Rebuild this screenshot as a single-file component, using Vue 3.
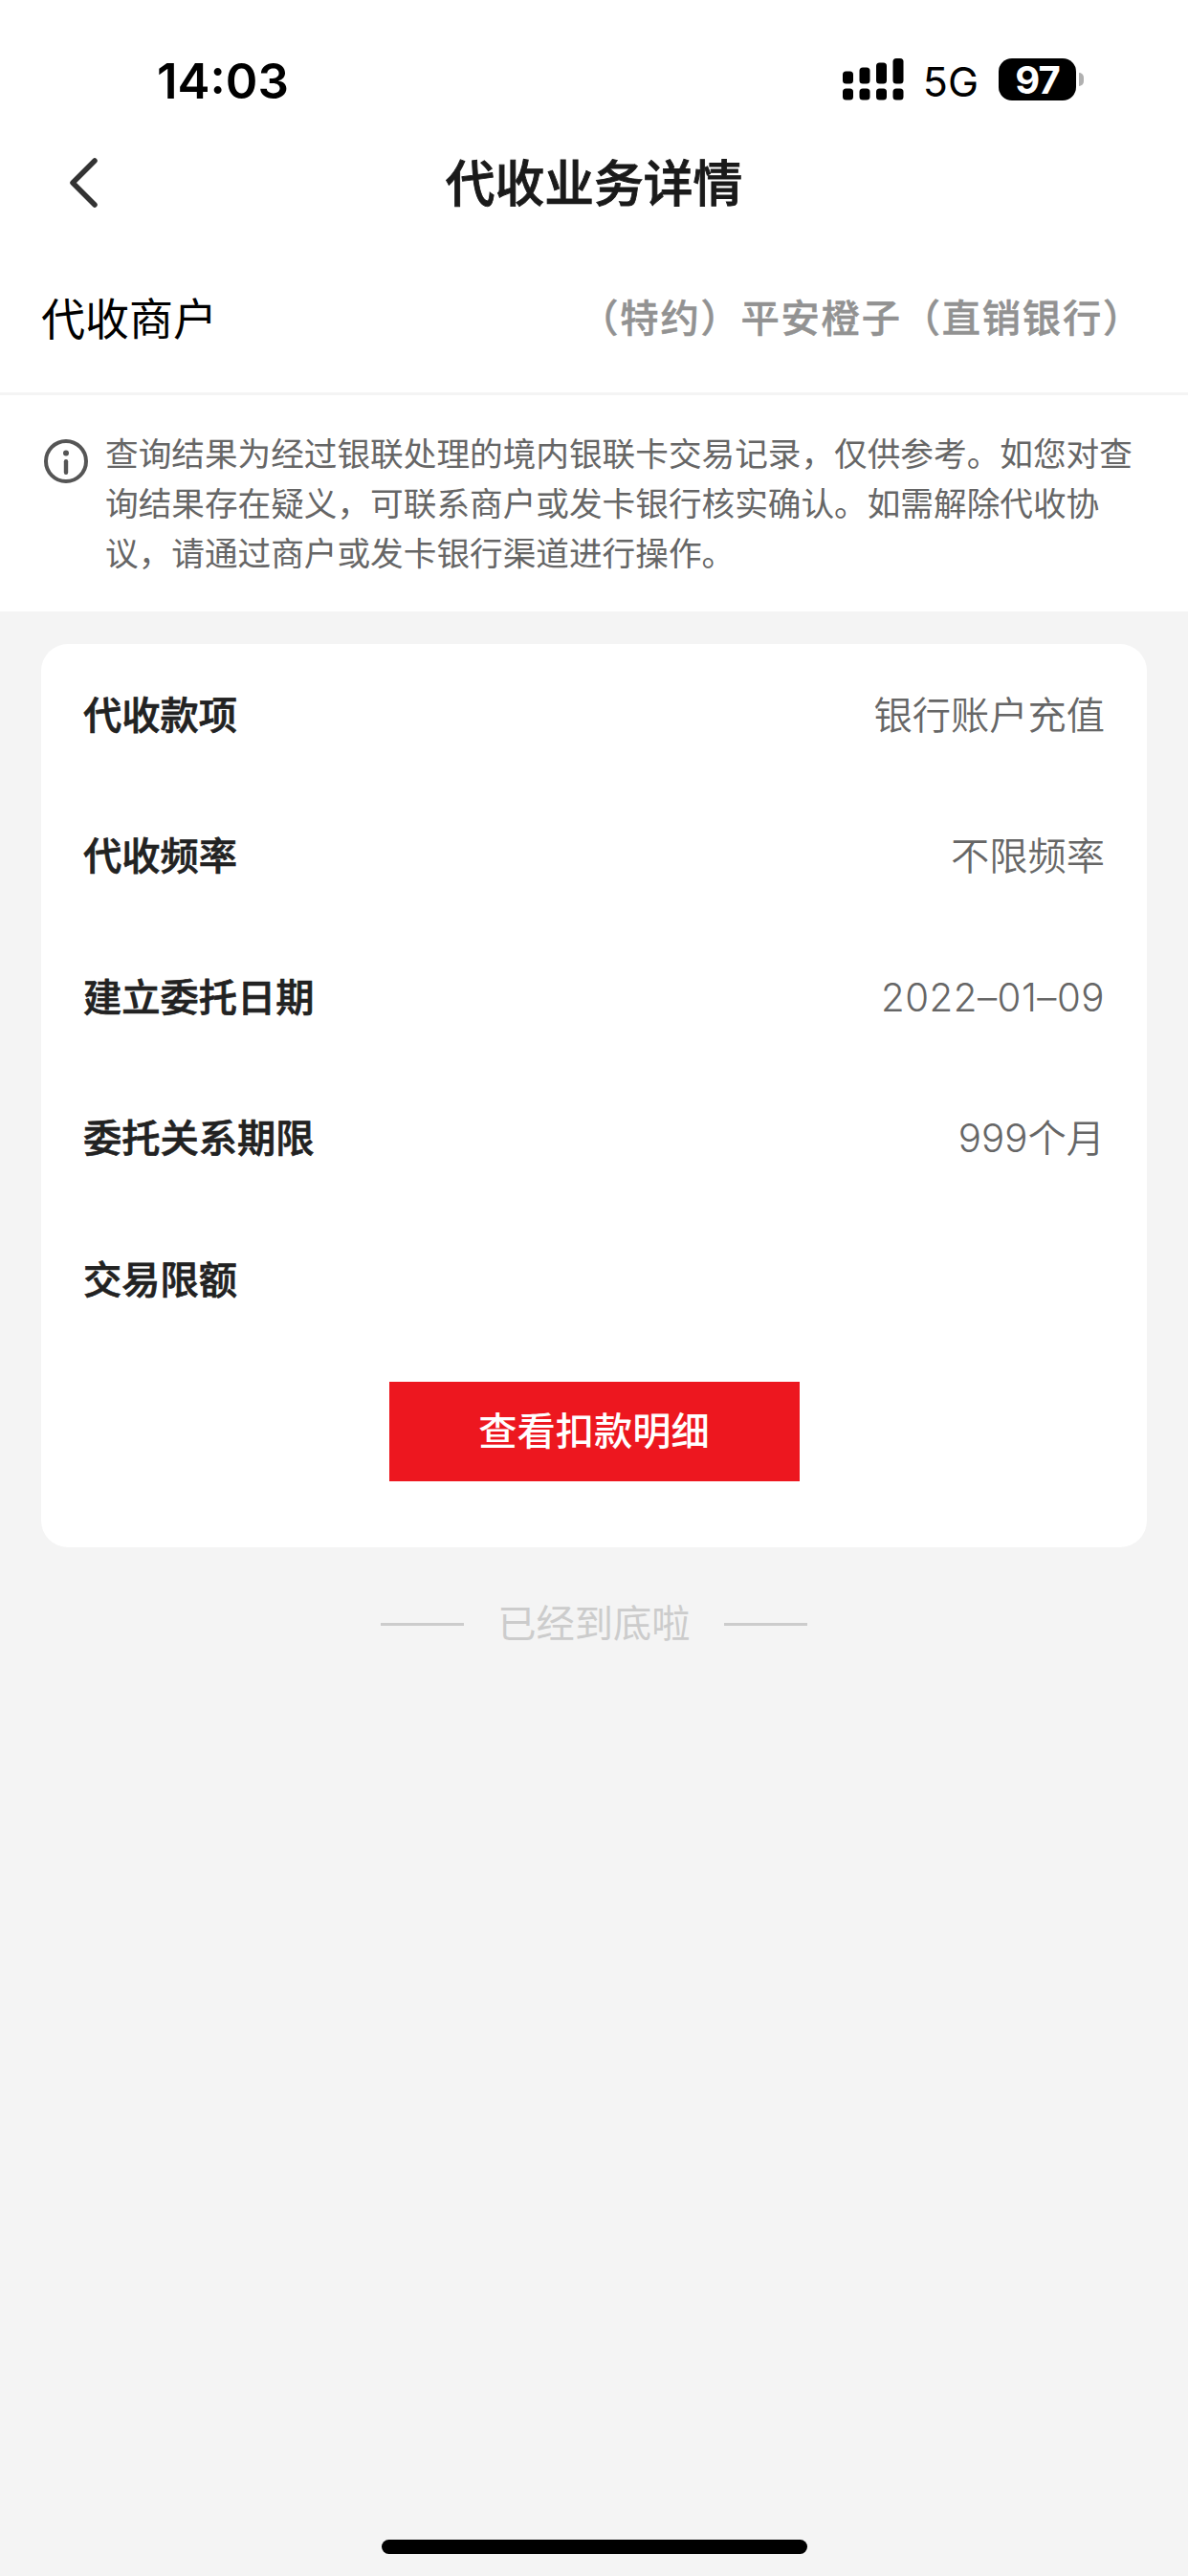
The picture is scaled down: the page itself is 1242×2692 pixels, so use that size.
<template>
  <div class="page">
    <header class="top">
      <div class="status-bar">
        <span class="time">14:03</span>
        <div class="status-right">
          <svg class="signal" viewBox="0 0 64 44">
            <g v-for="(bar, i) in signalBars" :key="i">
              <rect :x="i * 17.5" :y="bar" width="11" :height="26.5 - bar" rx="3.5" />
              <rect :x="i * 17.5" y="31.5" width="11" height="12" rx="3.5" />
            </g>
          </svg>
          <span class="network">5G</span>
          <div class="battery">
            <span class="battery-level">97</span>
            <span class="battery-cap"></span>
          </div>
        </div>
      </div>
      <div class="nav-bar">
        <button class="back" aria-label="返回">
          <svg viewBox="0 0 32 54">
            <path d="M28 4 L5 27 L28 50" />
          </svg>
        </button>
        <h1>代收业务详情</h1>
      </div>
    </header>

    <section class="merchant">
      <span class="merchant-label">代收商户</span>
      <span class="merchant-name">（特约）平安橙子（直销银行）</span>
    </section>

    <section class="notice">
      <svg class="info" viewBox="0 0 46 46">
        <circle class="ring" cx="23" cy="23" r="21" />
        <circle cx="23" cy="14.4" r="3" />
        <rect x="20.8" y="21" width="4.4" height="16" rx="2.2" />
      </svg>
      <p>{{ notice }}</p>
    </section>

    <main class="content">
      <div class="card">
        <div v-for="item in details" :key="item.label" class="row">
          <span class="label">{{ item.label }}</span>
          <span class="value" :class="{ date: item.isDate }">{{ item.value }}</span>
        </div>
        <button class="detail-button">查看扣款明细</button>
      </div>
      <div class="bottom-tip">
        <span class="line"></span>
        <span>已经到底啦</span>
        <span class="line"></span>
      </div>
    </main>

    <footer class="home">
      <div class="home-bar"></div>
    </footer>
  </div>
</template>

<script setup>
import { ref } from 'vue'

const signalBars = [13.5, 9.5, 4.5, 0]

const notice =
  '查询结果为经过银联处理的境内银联卡交易记录，仅供参考。如您对查询结果存在疑义，可联系商户或发卡银行核实确认。如需解除代收协议，请通过商户或发卡银行渠道进行操作。'

const details = ref([
  { label: '代收款项', value: '银行账户充值' },
  { label: '代收频率', value: '不限频率' },
  { label: '建立委托日期', value: '2022–01–09', isDate: true },
  { label: '委托关系期限', value: '999个月' },
  { label: '交易限额', value: '' }
])
</script>

<style>
body {
  margin: 0;
  background-color: #f4f4f4;
}
</style>

<style scoped>
.page {
  display: flex;
  flex-direction: column;
  width: 1242px;
  height: 2692px;
  background-color: #f4f4f4;
  font-family: Inter, 'Noto Sans CJK SC', sans-serif;
}

button {
  padding: 0;
  border: none;
  background: none;
  font-family: inherit;
}

.top {
  height: 264px;
  background-color: #fff;
}

.status-bar {
  display: flex;
  justify-content: space-between;
  align-items: center;
  height: 126px;
  padding: 40px 109px 0 164px;
  box-sizing: border-box;
  color: #000;
}

.time {
  padding-top: 3px;
  font-size: 51px;
  font-weight: 600;
  line-height: 60px;
}

.status-right {
  display: flex;
  align-items: center;
}

.signal {
  width: 64px;
  height: 44px;
}

.network {
  margin: 4px 21px 0 20px;
  font-size: 43px;
  line-height: 44px;
}

.battery {
  display: flex;
  align-items: center;
  gap: 3px;
}

.battery-level {
  width: 81px;
  height: 44px;
  border-radius: 14px;
  background-color: #000;
  color: #fff;
  font-size: 40px;
  font-weight: 700;
  line-height: 45px;
  text-align: center;
  letter-spacing: -1px;
}

.battery-cap {
  width: 5px;
  height: 14px;
  border-radius: 0 5px 5px 0;
  background-color: #b0b0b0;
}

.nav-bar {
  display: grid;
  grid-template-columns: 140px 1fr 140px;
  align-items: center;
  height: 130px;
}

.back {
  display: flex;
  padding-left: 71px;
}

.back svg {
  width: 32px;
  height: 54px;
}

.back path {
  fill: none;
  stroke: #333;
  stroke-width: 5.5;
  stroke-linecap: round;
  stroke-linejoin: round;
}

.nav-bar h1 {
  margin: 0;
  padding-top: 2px;
  color: #1a1a1a;
  font-size: 51.75px;
  font-weight: 500;
  line-height: 70px;
  text-align: center;
  -webkit-text-stroke: 0.9px #1a1a1a;
}

.merchant {
  display: flex;
  justify-content: space-between;
  height: 146px;
  padding: 0 47px 0 43px;
  border-bottom: 3px solid #f4f4f4;
  background-color: #fff;
  line-height: 138px;
}

.merchant-label {
  color: #000;
  font-size: 46px;
}

.merchant-name {
  color: #929292;
  font-size: 40.25px;
  font-weight: 500;
  letter-spacing: 1.8px;
  -webkit-text-stroke: 0.5px #929292;
}

.notice {
  display: flex;
  align-items: flex-start;
  gap: 18px;
  height: 226px;
  padding: 35px 40px 0 46px;
  box-sizing: border-box;
  background-color: #fff;
}

.info {
  flex: none;
  width: 46px;
  height: 46px;
  margin-top: 11px;
  fill: #555;
}

.info .ring {
  fill: none;
  stroke: #555;
  stroke-width: 4;
}

.notice p {
  margin: 0;
  color: #666;
  font-size: 34.65px;
  line-height: 52px;
}

.content {
  flex: 1;
  padding: 34px 43px 0;
}

.card {
  height: 944px;
  padding: 1px 44px 0;
  box-sizing: border-box;
  border-radius: 28px;
  background-color: #fff;
}

.row {
  display: flex;
  justify-content: space-between;
  height: 147.4px;
  font-size: 40.25px;
  line-height: 147.4px;
}

.label {
  color: #222;
  font-weight: 500;
  -webkit-text-stroke: 0.7px #222;
}

.value {
  color: #666;
  font-weight: 350;
}

.date {
  letter-spacing: 0.5px;
}

.detail-button {
  display: block;
  width: 429px;
  height: 104px;
  margin: 33px auto 0;
  background-color: #ed171f;
  color: #fff;
  font-size: 40.25px;
  font-weight: 500;
  line-height: 104px;
}

.bottom-tip {
  display: flex;
  justify-content: center;
  align-items: center;
  gap: 35px;
  height: 60px;
  margin-top: 50px;
  color: #ccc;
  font-size: 40.25px;
  line-height: 60px;
}

.bottom-tip .line {
  width: 87px;
  height: 3px;
  background-color: #ccc;
}

.home {
  display: flex;
  justify-content: center;
  padding-bottom: 23px;
}

.home-bar {
  width: 445px;
  height: 15px;
  border-radius: 8px;
  background-color: #000;
}
</style>
